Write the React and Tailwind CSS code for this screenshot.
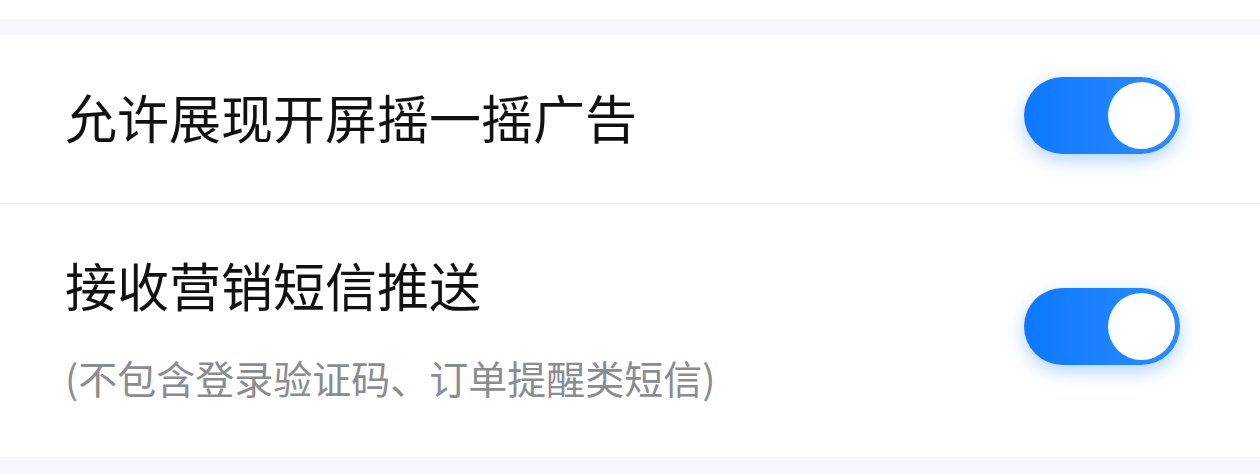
import { useState } from 'react';

function Toggle({ on, onClick }) {
    return (
        <button type="button" onClick={onClick}
            className={`relative w-[156px] h-[77px] rounded-full shrink-0 mb-[8px] transition-all ${on
                ? 'bg-gradient-to-r from-[#0a78ff] to-[#2c8cff] shadow-[0_6px_18px_rgba(30,130,255,0.35)]'
                : 'bg-[#e5e6eb]'}`}
        >
            <span className={`absolute top-[5px] w-[67px] h-[67px] rounded-full bg-white transition-all ${on ? 'left-[84px]' : 'left-[5px]'}`} />
        </button>
    );
}

export default function App() {
    const [splash, setSplash] = useState(true);
    const [sms, setSms] = useState(true);

    return (
        <div className="w-[1260px] h-[475px] bg-white overflow-hidden font-['Noto_Sans_CJK_SC','Noto_Sans',sans-serif]">
            <div className="h-[19px] bg-white" />
            <div className="h-[16px] bg-[#f6f7f9]" />

            {/* 开屏摇一摇 */}
            <div className="h-[169px] flex items-center justify-between pl-[65px] pr-[80px] border-b border-[#ececec]">
                <span className="text-[52px] leading-none text-[#111] mb-[4px]">允许展现开屏摇一摇广告</span>
                <Toggle on={splash} onClick={() => setSplash(!splash)} />
            </div>

            {/* 营销短信 */}
            <div className="h-[253px] flex items-center justify-between pl-[65px] pr-[80px]">
                <div className="flex flex-col gap-[47px] mb-[6px]">
                    <span className="text-[52px] leading-none text-[#111]">接收营销短信推送</span>
                    <span className="text-[39px] leading-none text-[#8a8c93]">(不包含登录验证码、订单提醒类短信)</span>
                </div>
                <Toggle on={sms} onClick={() => setSms(!sms)} />
            </div>

            <div className="h-[17px] bg-[#f6f7f9]" />
        </div>
    );
}
